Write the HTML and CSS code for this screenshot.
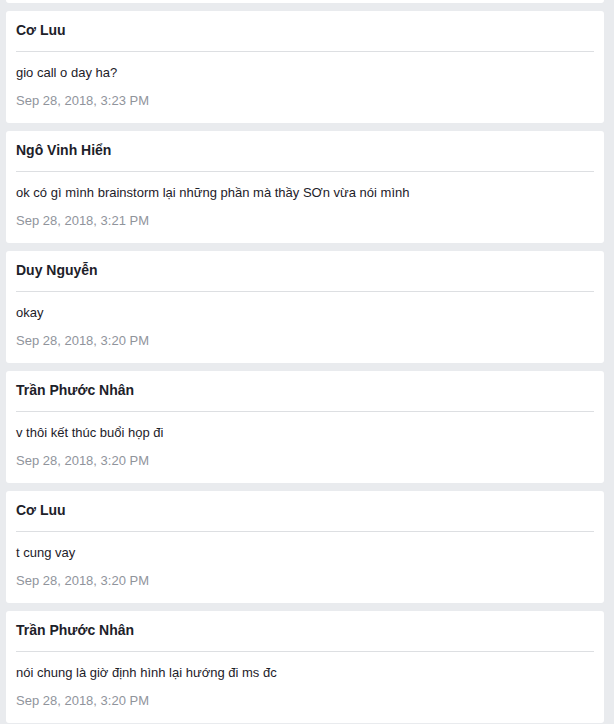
FILE: index.html
```html
<!DOCTYPE html>
<html lang="vi">
<head>
<meta charset="utf-8">
<link rel="stylesheet" href="styles.css">
</head>
<body>
<div class="feed">
  <div class="card-tail"></div>
  <div class="card">
    <div class="head"><span class="name">Cơ Luu</span></div>
    <div class="msg">gio call o day ha?</div>
    <div class="date">Sep 28, 2018, 3:23 PM</div>
  </div>
  <div class="card">
    <div class="head"><span class="name">Ngô Vinh Hiển</span></div>
    <div class="msg">ok có gì mình brainstorm lại những phần mà thầy SƠn vừa nói mình</div>
    <div class="date">Sep 28, 2018, 3:21 PM</div>
  </div>
  <div class="card">
    <div class="head"><span class="name">Duy Nguyễn</span></div>
    <div class="msg">okay</div>
    <div class="date">Sep 28, 2018, 3:20 PM</div>
  </div>
  <div class="card">
    <div class="head"><span class="name">Trần Phước Nhân</span></div>
    <div class="msg">v thôi kết thúc buổi họp đi</div>
    <div class="date">Sep 28, 2018, 3:20 PM</div>
  </div>
  <div class="card">
    <div class="head"><span class="name">Cơ Luu</span></div>
    <div class="msg">t cung vay</div>
    <div class="date">Sep 28, 2018, 3:20 PM</div>
  </div>
  <div class="card">
    <div class="head"><span class="name">Trần Phước Nhân</span></div>
    <div class="msg">nói chung là giờ định hình lại hướng đi ms đc</div>
    <div class="date">Sep 28, 2018, 3:20 PM</div>
  </div>
</div>
</body>
</html>
```

FILE: styles.css
```css
html, body {
  margin: 0;
  padding: 0;
  background: #e9ebee;
  height: 100%;
  overflow: hidden;
}
body {
  font-family: "Liberation Sans", Arial, sans-serif;
  color: #1d2129;
}
.feed {
  display: flex;
  flex-direction: column;
  gap: 8px;
  padding: 0 10px 0 6px;
}
.card-tail {
  height: 3px;
  background: #fff;
  border-radius: 0 0 3px 3px;
  flex: none;
}
.card {
  background: #fff;
  border-radius: 3px;
  height: 112px;
  box-sizing: border-box;
  padding: 0 10px;
  flex: none;
}
.head {
  height: 41px;
  box-sizing: border-box;
  padding-top: 10px;
  border-bottom: 1px solid #dddfe2;
}
.name {
  font-weight: bold;
  font-size: 14px;
  line-height: 18px;
  display: block;
}
.msg {
  margin-top: 13px;
  font-size: 13px;
  line-height: 16px;
}
.date {
  margin-top: 12px;
  font-size: 13px;
  line-height: 16px;
  color: #90949c;
}
```
